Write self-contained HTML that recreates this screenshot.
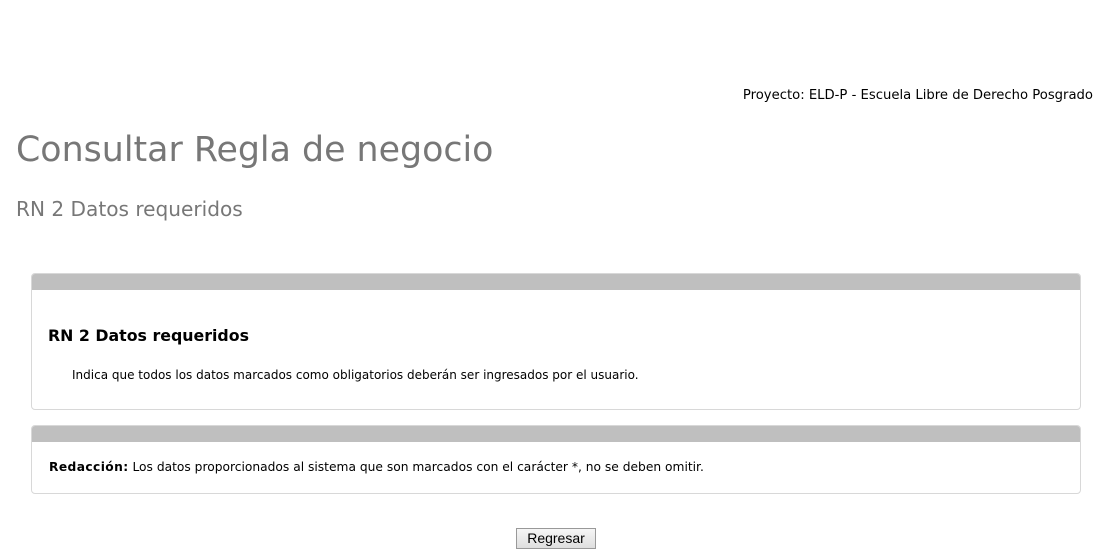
<!DOCTYPE html>
<html><head><meta charset="utf-8"><style>
body{margin:0;width:1096px;height:560px;background:#fff;font-family:"DejaVu Sans","Liberation Sans",sans-serif;position:relative;overflow:hidden}
.a{position:absolute;white-space:nowrap}
.panel{position:absolute;left:31px;width:1048px;border:1px solid #d8d8d8;border-radius:4px;overflow:hidden;background:#fff}
.hd{height:16px;background:#bfbfbf}
</style></head><body>
<div class="a" style="right:3px;top:88px;font-size:13.2px;color:#000">Proyecto: ELD-P - Escuela Libre de Derecho Posgrado</div>
<div class="a" style="left:16px;top:130px;font-size:34.8px;color:#777">Consultar Regla de negocio</div>
<div class="a" style="left:16px;top:197px;font-size:20.1px;color:#777">RN 2 Datos requeridos</div>
<div class="panel" style="top:273px;height:135px"><div class="hd"></div></div>
<div class="a" style="left:48px;top:326px;font-size:15.8px;font-weight:bold;color:#000">RN 2 Datos requeridos</div>
<div class="a" style="left:72px;top:368px;font-size:12px;color:#000">Indica que todos los datos marcados como obligatorios deberán ser ingresados por el usuario.</div>
<div class="panel" style="top:425px;height:67px"><div class="hd"></div></div>
<div class="a" style="left:49px;top:460px;font-size:12.25px;color:#000"><b style="letter-spacing:0.4px">Redacción:</b> Los datos proporcionados al sistema que son marcados con el carácter *, no se deben omitir.</div>
<div class="a" style="left:516px;top:528px;width:78px;height:19px;border:1px solid #999;background:linear-gradient(#f6f6f6,#dedede);font-family:'Liberation Sans',sans-serif;font-size:14px;text-align:center;line-height:19px">Regresar</div>
</body></html>
